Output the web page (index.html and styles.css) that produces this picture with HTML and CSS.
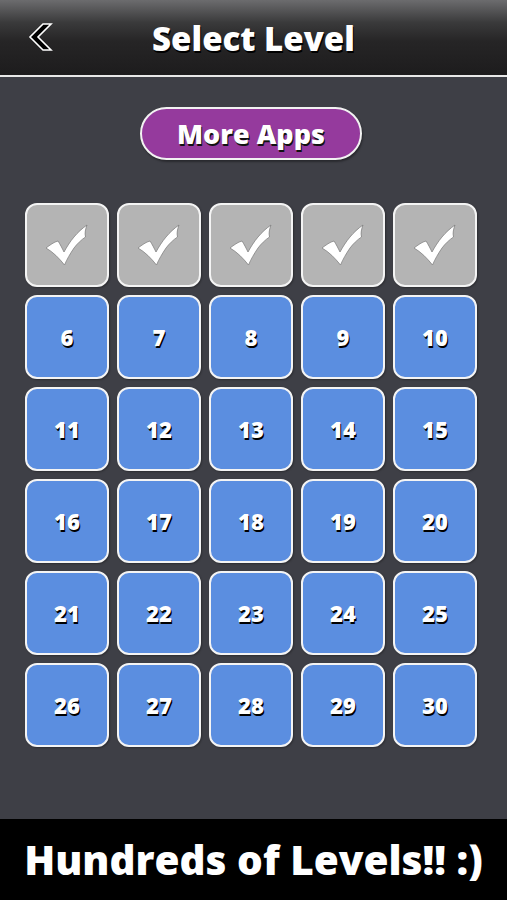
FILE: index.html
```html
<!DOCTYPE html>
<html lang="en">
<head>
    <meta charset="UTF-8">
    <meta name="viewport" content="width=device-width, initial-scale=1.0">
    <title>Select Level</title>
    <link rel="stylesheet" href="styles.css">
</head>
<body>
    <div class="screen">
        <div class="topbar">
            <svg class="back" width="28" height="30" viewBox="0 0 28 30">
                <path d="M18 2 L26 2 L13 15 L26 28 L18 28 L5 15 Z" fill="#000" stroke="#fff" stroke-width="1.6" stroke-linejoin="miter"/>
            </svg>
            <h1>Select Level</h1>
        </div>

        <div class="content">
            <button class="more-apps">More Apps</button>

            <div class="levels" id="levels"></div>
        </div>

        <div class="banner">Hundreds of Levels!! :)</div>
    </div>
    <script>
        const levels = document.getElementById("levels");
        const check = '<svg width="44" height="42" viewBox="-1 -1 44 42"><path d="M0 23 C4 20 8 17 12 16 C14 19 16 23 18 27 C24 16 31 7 41 0 C39.5 4 38.5 8 39.5 12 C35 15 31 19 28 23 C24 29 21 34 18.5 40 C13 33 7 27 0 23 Z" fill="#fff" stroke="#777" stroke-width="0.7"/></svg>';
        let html = "";
        for (let i = 1; i <= 30; i++) {
            if (i <= 5) {
                html += `<div class="tile done">${check}</div>`;
            } else {
                html += `<div class="tile">${i}</div>`;
            }
        }
        levels.innerHTML = html;
    </script>
</body>
</html>
```

FILE: styles.css
```css
body {
    margin: 0;
    background: #3e3f46;
    font-family: "Open Sans", Lato, sans-serif;
}
.screen {
    width: 507px;
    height: 900px;
    display: flex;
    flex-direction: column;
    overflow: hidden;
}
.topbar {
    height: 75px;
    border-bottom: 2px solid #e8e8e8;
    background: linear-gradient(to bottom, #6c6c6e 0%, #3a3a3b 30%, #262526 55%, #1d1c1d 100%);
    display: flex;
    align-items: center;
    justify-content: center;
    position: relative;
}
.back {
    position: absolute;
    left: 25px;
    top: 22px;
}
.topbar h1 {
    margin: 0;
    color: #fff;
    font-size: 33px;
    font-weight: 800;
    text-shadow: 1px 2px 0 #000;
    margin-top: 2px;
}
.content {
    flex: 1;
    display: flex;
    flex-direction: column;
    align-items: center;
    padding-top: 30px;
    padding-right: 5px;
    background: #3e3f46;
}
.more-apps {
    width: 222px;
    height: 53px;
    border-radius: 27px;
    border: 2px solid #f2f2f2;
    background: #953a9d;
    color: #fff;
    font-family: "Open Sans", sans-serif;
    font-size: 27px;
    font-weight: 800;
    text-shadow: 1px 2px 0 #111;
    box-shadow: 1px 2px 2px rgba(0, 0, 0, 0.35);
    padding: 0;
}
.levels {
    margin-top: 43px;
    display: grid;
    grid-template-columns: repeat(5, 84px);
    grid-auto-rows: 84px;
    gap: 8px;
}
.tile {
    box-sizing: border-box;
    border: 2px solid #f4f4f4;
    border-radius: 12px;
    background: #5b8ee0;
    color: #fff;
    display: flex;
    align-items: center;
    justify-content: center;
    font-size: 22px;
    font-weight: 800;
    text-shadow: 1px 2px 0 #000;
    box-shadow: 1px 1px 2px rgba(0, 0, 0, 0.3);
}
.tile.done {
    background: #b4b4b4;
}
.banner {
    height: 81px;
    background: #000;
    color: #fff;
    display: flex;
    align-items: center;
    justify-content: center;
    font-size: 40.5px;
    font-weight: 800;
}
```
